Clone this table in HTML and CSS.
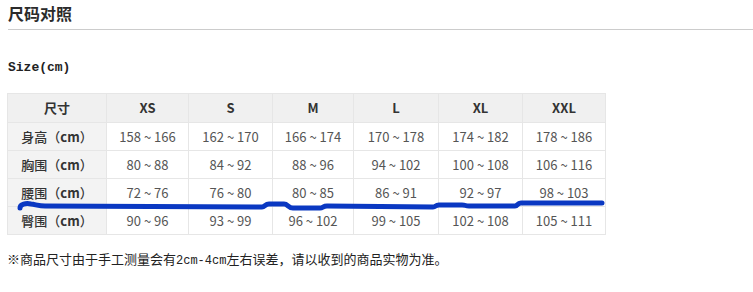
FILE: index.html
```html
<!DOCTYPE html>
<html lang="zh-CN">
<head>
<meta charset="utf-8">
<title>尺码对照</title>
<link rel="stylesheet" href="styles.css">
</head>
<body>
<h2 class="title">尺码对照</h2>
<p class="size-label">Size(cm)</p>
<div class="table-wrap">
  <table class="size-table">
    <colgroup>
      <col class="c-label"><col class="c-xs"><col class="c-s"><col class="c-m"><col class="c-l"><col class="c-xl"><col class="c-xxl">
    </colgroup>
    <thead>
      <tr><th class="label">尺寸</th><th>XS</th><th>S</th><th>M</th><th>L</th><th>XL</th><th>XXL</th></tr>
    </thead>
    <tbody>
      <tr><td class="label">身高（<b>cm</b>）</td><td>158 ~ 166</td><td>162 ~ 170</td><td>166 ~ 174</td><td>170 ~ 178</td><td>174 ~ 182</td><td>178 ~ 186</td></tr>
      <tr><td class="label">胸围（<b>cm</b>）</td><td>80 ~ 88</td><td>84 ~ 92</td><td>88 ~ 96</td><td>94 ~ 102</td><td>100 ~ 108</td><td>106 ~ 116</td></tr>
      <tr><td class="label">腰围（<b>cm</b>）</td><td>72 ~ 76</td><td>76 ~ 80</td><td>80 ~ 85</td><td>86 ~ 91</td><td>92 ~ 97</td><td>98 ~ 103</td></tr>
      <tr><td class="label">臀围（<b>cm</b>）</td><td>90 ~ 96</td><td>93 ~ 99</td><td>96 ~ 102</td><td>99 ~ 105</td><td>102 ~ 108</td><td>105 ~ 111</td></tr>
    </tbody>
  </table>
  <svg class="scribble" width="598" height="141" viewBox="0 0 598 141" aria-hidden="true">
    <path d="M13 115 C13 111 19 110 24 111 C30 112 33 113 38 113 L255 114 C258 114 258 111 262 111 L277 111 C281 111 281 115 286 115 L313 115 C316 115 316 113 320 113 L426 114 C429 114 428 112 432 112 L455 112 C459 112 458 113 462 113 L508 113 C511 113 510 110 514 110 L595 110" fill="none" stroke="#0a38c2" stroke-width="5" stroke-linecap="round" stroke-linejoin="round"/>
  </svg>
</div>
<p class="note">※商品尺寸由于手工测量会有<span class="mono">2cm-4cm</span>左右误差，请以收到的商品实物为准。</p>
</body>
</html>
```

FILE: styles.css
```css
html, body {
  margin: 0;
  padding: 0;
  background: #ffffff;
  color: #333333;
  font-family: "Noto Sans CJK SC", "Noto Sans", sans-serif;
}

.title {
  margin: 0 0 0 8px;
  padding: 2px 0 5px 0;
  font-size: 16px;
  line-height: 22px;
  font-weight: 700;
  color: #2b2b2b;
  border-bottom: 1px solid #cccccc;
}

.size-label {
  margin: 30px 0 0 8px;
  font-family: "Liberation Mono", monospace;
  font-weight: 700;
  font-size: 13px;
  line-height: 16px;
  color: #222222;
}

.table-wrap {
  position: relative;
  margin: 17px 0 0 7px;
  width: 598px;
}

.size-table {
  border-collapse: collapse;
  table-layout: fixed;
  width: 598px;
  font-size: 13px;
  border: 1px solid #e6e6e6;
}

.c-label { width: 99px; }
.c-xs { width: 82px; }
.c-s { width: 84px; }
.c-m { width: 81px; }
.c-l { width: 85px; }
.c-xl { width: 84px; }
.c-xxl { width: 83px; }

.size-table th,
.size-table td {
  border: 1px solid #e6e6e6;
  text-align: center;
  padding: 0;
  line-height: 18px;
}

.size-table thead th {
  height: 28px;
  background: #f0f0f0;
  font-weight: 700;
  color: #333333;
}

.size-table tbody td {
  height: 27px;
  color: #555555;
  background: #ffffff;
}

.size-table tbody td.label {
  background: #f3f3f3;
  color: #333333;
  font-weight: 500;
}

.size-table b {
  font-weight: 700;
}

.scribble {
  position: absolute;
  left: 0;
  top: 0;
  pointer-events: none;
}

.note {
  margin: 16px 0 0 7px;
  font-size: 13px;
  line-height: 16px;
  color: #222222;
}

.note .mono {
  font-family: "Liberation Mono", monospace;
  font-size: 12px;
}
```
